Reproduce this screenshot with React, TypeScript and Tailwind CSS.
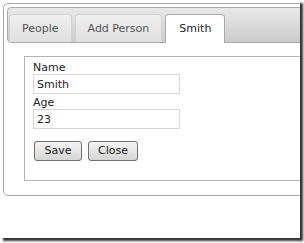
import { useState } from "react";

const tabs = ["People", "Add Person", "Smith"];

const App = () => {
  const [active, setActive] = useState(2);
  const [name, setName] = useState("Smith");
  const [age, setAge] = useState("23");

  return (
    <div className="w-[304px] h-[243px] bg-white font-['DejaVu_Sans',sans-serif] text-[11px]">
      <div className="w-[300px] h-[238px] overflow-hidden bg-white shadow-[3px_3px_2px_rgba(0,0,0,0.8)]">
        <div className="pt-[3px] pl-[3px]">
          {/* tab widget */}
          <div className="w-[360px] h-[193px] rounded-[5px] border border-[#aaaaaa] bg-white p-[3px]">
            <div className="flex items-end gap-[3px] h-[36px] rounded-[4px] border border-[#aaaaaa] bg-gradient-to-b from-[#e9e9e9] to-[#cccccc] pl-[1px]">
              {tabs.map((t, i) => (
                <button
                  key={t}
                  onClick={() => setActive(i)}
                  className={
                    i === active
                      ? "h-[29px] -mb-px px-[13px] rounded-t-[4px] border border-b-0 border-[#aaaaaa] bg-white text-[#212121] leading-[26px]"
                      : "h-[28px] px-[12px] rounded-t-[4px] border border-b-0 border-[#d3d3d3] bg-gradient-to-b from-[#f0f0f0] to-[#e0e0e0] text-[#555555] leading-[26px]"
                  }
                >
                  {t}
                </button>
              ))}
            </div>
            <div className="pl-[17px] pt-[13px]">
              <div className="h-[125px] border border-[#b4b4b4] pl-[8px] pt-[4px] text-[#222222]">
                <div className="leading-[13px]">Name</div>
                <input
                  value={name}
                  onChange={(e) => setName(e.target.value)}
                  className="block w-[147px] h-[20px] border border-[#d6d6d6] px-[3px] text-[11px] text-[#222222] outline-none"
                />
                <div className="leading-[13px] mt-[2px]">Age</div>
                <input
                  value={age}
                  onChange={(e) => setAge(e.target.value)}
                  className="block w-[147px] h-[20px] border border-[#d6d6d6] px-[3px] text-[11px] text-[#222222] outline-none"
                />
                <div className="flex gap-[6px] mt-[12px] ml-[1px]">
                  <button className="w-[48px] h-[20px] rounded-[3px] border border-[#707070] bg-gradient-to-b from-[#f4f4f4] to-[#d6d6d6] text-[#222222]">
                    Save
                  </button>
                  <button className="w-[50px] h-[20px] rounded-[3px] border border-[#707070] bg-gradient-to-b from-[#f4f4f4] to-[#d6d6d6] text-[#222222]">
                    Close
                  </button>
                </div>
              </div>
            </div>
          </div>
        </div>
      </div>
    </div>
  );
};

export default App;
